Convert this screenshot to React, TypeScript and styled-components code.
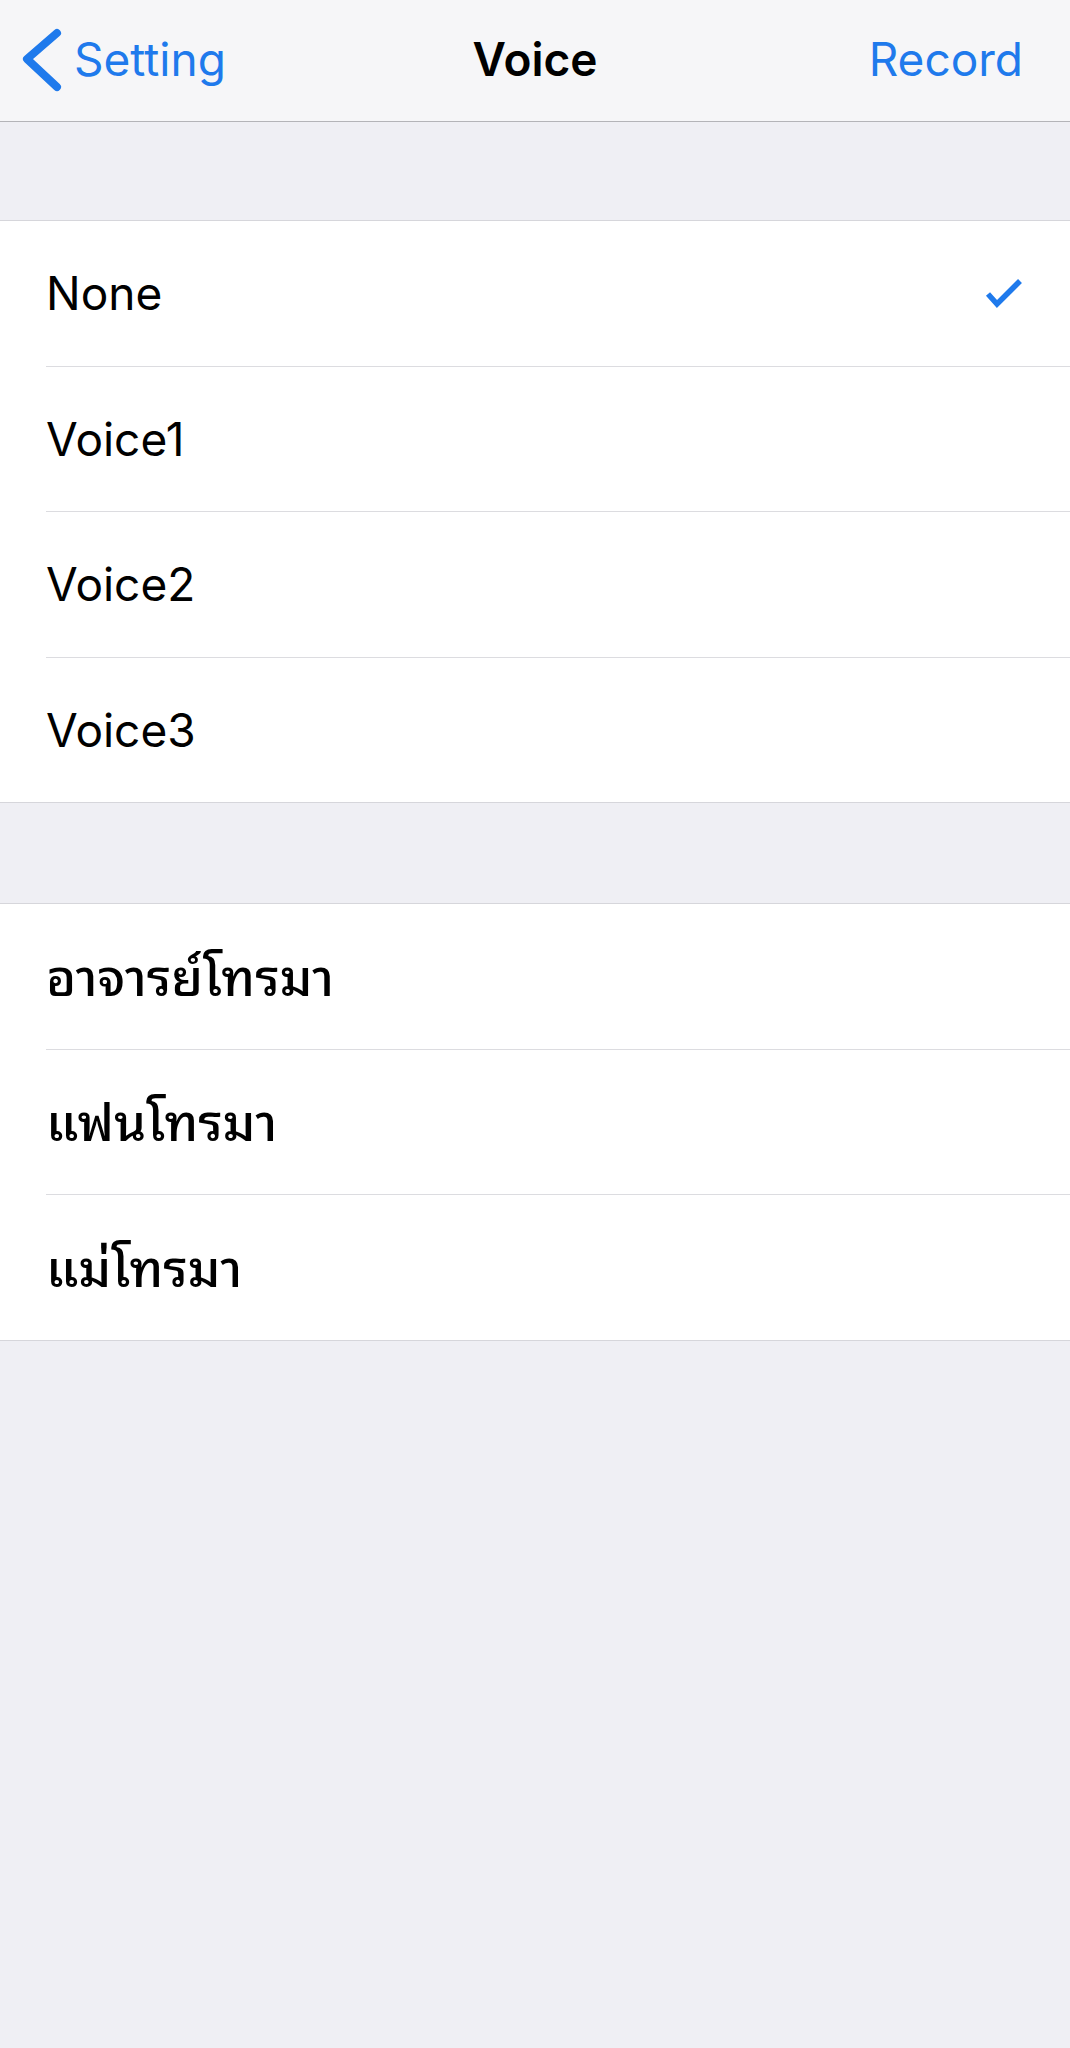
import styled, { createGlobalStyle } from 'styled-components'

/* ───── theme values ───── */
const BLUE = '#1f7aec'
const FONT = `Inter, "Noto Sans Thai", "Noto Sans", "DejaVu Sans", sans-serif`
const THAI = `"Noto Sans Thai Looped", Loma, Garuda, "Noto Sans Thai", Inter, "Noto Sans", sans-serif`

const GlobalStyle = createGlobalStyle`
  html, body { margin: 0; padding: 0; background: #efeff4; }
  body { font-family: ${FONT}; -webkit-font-smoothing: antialiased; }
  * { box-sizing: border-box; }
`

/* ───── nav bar ───── */
const NavBar = styled.header`
  height: 122px;
  display: grid;
  grid-template-columns: 1fr auto 1fr;
  align-items: center;
  padding: 0 47px 4px 47px;
  background: #f6f6f8;
  border-bottom: 1px solid #b4b4b8;
`

const BackBtn = styled.button`
  justify-self: start;
  margin-left: -27px;
  display: flex;
  align-items: center;
  gap: 10px;
  padding: 0;
  border: 0;
  background: none;
  color: ${BLUE};
  font: 400 46px/1 ${FONT};
  svg { display: block; }
`

const Title = styled.h1`
  margin: 0;
  font: 600 46px/1 ${FONT};
  color: #000;
`

const ActionBtn = styled.button`
  justify-self: end;
  padding: 0;
  border: 0;
  background: none;
  color: ${BLUE};
  font: 400 46px/1 ${FONT};
`

/* ───── grouped list ───── */
const Section = styled.section<{ $gap: number }>`
  margin-top: ${({ $gap }) => $gap}px;
  background: #fff;
  border-top: 1px solid #d6d6db;
  border-bottom: 1px solid #d6d6db;
`

const Row = styled.div`
  height: 145.5px;
  margin-left: 46px;
  padding-right: 48px;
  display: flex;
  align-items: center;
  justify-content: space-between;
  border-bottom: 1px solid #dcdce0;
  &:last-child { border-bottom: 0; height: 144.5px; }
`

const Label = styled.span<{ $thai?: boolean }>`
  font-family: ${({ $thai }) => ($thai ? THAI : FONT)};
  font-size: ${({ $thai }) => ($thai ? 51 : 46)}px;
  font-weight: ${({ $thai }) => ($thai ? 500 : 400)};
  margin-bottom: ${({ $thai }) => ($thai ? 6 : 0)}px;
  color: #000;
  line-height: 1;
`

const Check = () => (
  <svg width="38" height="30" viewBox="0 0 38 30">
    <polyline points="4,16 13,26 36,3" fill="none" stroke={BLUE} strokeWidth="5.5" />
  </svg>
)

const Chevron = () => (
  <svg width="44" height="68" viewBox="0 0 44 68">
    <polyline points="37,8 7,34 37,62" fill="none" stroke={BLUE} strokeWidth="8"
      strokeLinecap="round" strokeLinejoin="round" />
  </svg>
)

const voices = ['None', 'Voice1', 'Voice2', 'Voice3']
const people = ['อาจารย์โทรมา', 'แฟนโทรมา', 'แม่โทรมา']

export default function App() {
  const selected = 'None'

  return (
    <>
      <GlobalStyle />
      <NavBar>
        <BackBtn><Chevron />Setting</BackBtn>
        <Title>Voice</Title>
        <ActionBtn>Record</ActionBtn>
      </NavBar>

      <Section $gap={98}>
        {voices.map(v => (
          <Row key={v}>
            <Label>{v}</Label>
            {v === selected && <Check />}
          </Row>
        ))}
      </Section>

      <Section $gap={100}>
        {people.map(p => (
          <Row key={p}>
            <Label $thai>{p}</Label>
          </Row>
        ))}
      </Section>
    </>
  )
}
